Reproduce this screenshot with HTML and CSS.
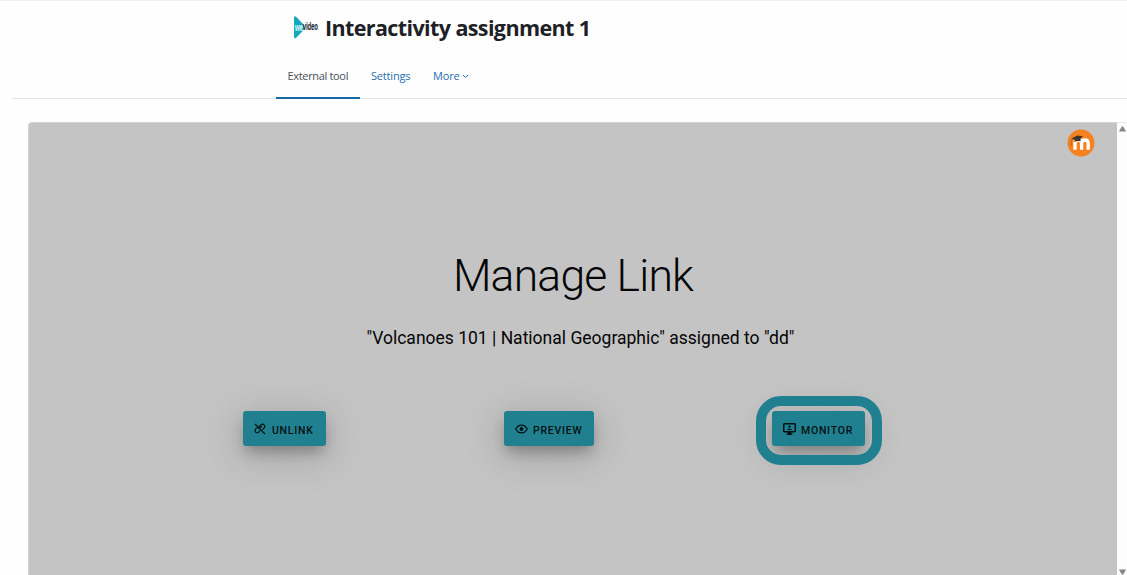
FILE: index.html
```html
<!DOCTYPE html>
<html lang="en">
<head>
    <meta charset="UTF-8">
    <meta name="viewport" content="width=device-width, initial-scale=1.0">
    <title>Interactivity assignment 1</title>
    <link rel="stylesheet" href="styles.css">
</head>
<body>
    <header>
        <div class="title-row">
            <svg class="wevideo-logo" width="26" height="26" viewBox="0 0 26 26">
                <path d="M1 3Q1 .4 3.2 1.8L10 9Q12.6 12.4 10 15.8L3.2 22.8Q1 24.4 1 21.6Z" fill="#12a9bb"/>
                <g transform="scale(1 1.7)">
                    <text class="logo-we" x="1.8" y="9.2">we</text>
                    <text class="logo-video" x="9.8" y="8.8">video</text>
                </g>
            </svg>
            <h1>Interactivity assignment 1</h1>
        </div>
        <nav>
            <a class="tab active" href="#">External tool</a>
            <a class="tab tab-settings" href="#">Settings</a>
            <a class="tab tab-more" href="#">More
                <svg width="7" height="5" viewBox="0 0 7 5"><path d="M1 1l2.5 2.4L6 1" fill="none" stroke="currentColor" stroke-width="1"/></svg>
            </a>
        </nav>
    </header>

    <main>
        <section class="tool-frame">
            <svg class="moodle-badge" width="28" height="28" viewBox="0 0 28 28">
                <circle cx="14" cy="14" r="13.5" fill="#f5821f"/>
                <path d="M8 20.8V14.5Q8 11 11.2 11Q14.6 11 14.6 14.2V20.8M14.6 14.2Q14.6 11 17.9 11Q21.2 11 21.2 14.5V20.8" fill="none" stroke="#fff" stroke-width="3.3"/>
                <path d="M4.2 9.7L10.2 6.6L16 7.3L13.6 9.2V12.3Q10.3 11.3 7.5 12.9V10.4Z" fill="#40352b"/>
                <path d="M5.1 10Q3.8 13 4.3 17" fill="none" stroke="#8c572b" stroke-width=".6"/>
            </svg>
            <h2>Manage Link</h2>
            <p class="assigned">"Volcanoes 101 | National Geographic" assigned to "dd"</p>
            <div class="actions">
                <button class="btn btn-unlink">
                    <svg width="12" height="12" viewBox="0 0 12 12" fill="none" stroke="currentColor" stroke-width="1.2">
                        <path d="M1 1l10 10M5.5 3.2l1.3-1.3a2.2 2.2 0 0 1 3.2 3.2L8.4 6.7M5.3 5.4L4 4.5a2 2 0 0 0-1.6.6l-.7.8a2.2 2.2 0 0 0 3.1 3.2l1.4-1.4M5 3.7l3 .2M6.5 7.3l1-.9"/>
                    </svg>
                    <span>UNLINK</span>
                </button>
                <button class="btn btn-preview">
                    <svg width="13" height="10" viewBox="0 0 13 10">
                        <path d="M.8 5Q2.6 1.1 6.5 1.1T12.2 5Q10.4 8.9 6.5 8.9T.8 5Z" fill="none" stroke="currentColor" stroke-width="1.2"/>
                        <circle cx="6.5" cy="5" r="1.9" fill="currentColor"/>
                    </svg>
                    <span>PREVIEW</span>
                </button>
                <button class="btn btn-monitor">
                    <svg width="13" height="12" viewBox="0 0 13 12">
                        <rect x=".75" y=".75" width="11.5" height="8" rx=".7" fill="none" stroke="currentColor" stroke-width="1.5"/>
                        <path d="M4.8 8.5h3.4v2h1.1V12H3.7v-1.5h1.1ZM4 7V6.4Q6.5 4.9 9 6.4V7Z" fill="currentColor"/>
                        <circle cx="6.5" cy="3.6" r="1.2" fill="currentColor"/>
                    </svg>
                    <span>MONITOR</span>
                </button>
            </div>
        </section>
        <div class="scrollbar">
            <svg width="7" height="6" viewBox="0 0 7 6"><path d="M2.8.5h1.4L7 5.5H0Z" fill="#858585"/></svg>
            <svg width="7" height="6" viewBox="0 0 7 6"><path d="M0 .5h7L4.2 5.5H2.8Z" fill="#858585"/></svg>
        </div>
    </main>
</body>
</html>
```
FILE: styles.css
```css
body {
    margin: 0;
    height: 575px;
    overflow: hidden;
    box-sizing: border-box;
    border-top: 1px solid #eceeef;
    background-color: #fefefe;
    font-family: "Open Sans", "Noto Sans", sans-serif;
    color: #1d2125;
}

header {
    height: 98px;
    margin-left: 12px;
    box-sizing: border-box;
    border-bottom: 1px solid #dee2e6;
}

.title-row {
    display: flex;
    align-items: center;
    height: 53px;
    padding-left: 281px;
}

.wevideo-logo {
    margin-right: 6px;
}

.logo-we {
    font: bold 6px "Open Sans", sans-serif;
    letter-spacing: -0.3px;
    fill: #d6f5f8;
}

.logo-video {
    font: bold 6px "Open Sans", sans-serif;
    letter-spacing: -0.3px;
    fill: #2d3338;
}

h1 {
    margin: 0;
    padding-top: 1px;
    font-size: 21.5px;
    font-weight: bold;
    line-height: 30px;
    letter-spacing: -0.61px;
    white-space: nowrap;
}

nav {
    display: flex;
    height: 45px;
    padding-left: 264px;
}

.tab {
    box-sizing: border-box;
    height: 45px;
    padding-top: 14px;
    font-size: 11px;
    line-height: 16px;
    letter-spacing: -0.18px;
    color: #1f6fb2;
    text-decoration: none;
    white-space: nowrap;
}

.tab.active {
    width: 84px;
    padding-left: 11.5px;
    letter-spacing: -0.33px;
    color: #495057;
    border-bottom: 2px solid #1768a6;
}

.tab-settings {
    width: 62px;
    padding-left: 11px;
}

.tab-more {
    padding-left: 11px;
}

.tab-more svg {
    margin-bottom: 1px;
}

main {
    display: flex;
    height: 453px;
    margin: 23px 0 0 28px;
}

.tool-frame {
    position: relative;
    width: 1089px;
    box-sizing: border-box;
    padding-top: 123px;
    border-top: 1px solid #d4d6d8;
    border-left: 1px solid #d4d6d8;
    border-top-left-radius: 4px;
    background-color: #c4c4c4;
    font-family: Roboto, sans-serif;
    color: #050505;
}

.moodle-badge {
    position: absolute;
    top: 6px;
    right: 22px;
}

h2 {
    margin: 0;
    font-size: 44.5px;
    font-weight: 300;
    line-height: 60px;
    letter-spacing: -0.8px;
    text-align: center;
}

.assigned {
    margin: 21px 0 0;
    padding-left: 15px;
    font-size: 17.5px;
    line-height: 22px;
    text-align: center;
}

.actions {
    display: flex;
    gap: 178px;
    margin: 62px 0 0 214px;
}

.btn {
    position: relative;
    display: flex;
    align-items: center;
    height: 35px;
    padding: 0 0 0 11px;
    border: none;
    border-radius: 3px;
    background-color: #20808f;
    box-shadow: 0 8px 14px -3px rgba(0, 0, 0, 0.27), 0 8px 36px 4px rgba(0, 0, 0, 0.16);
    color: #061012;
    font-family: Roboto, sans-serif;
    font-size: 10.5px;
    font-weight: 500;
    letter-spacing: 0.75px;
}

.btn span {
    padding-top: 3px;
}

.btn-unlink {
    width: 83px;
    gap: 6px;
}

.btn-preview {
    width: 90px;
    gap: 5px;
}

.btn-monitor {
    width: 93px;
    gap: 5px;
}

/* ring around the highlighted button */
.btn-monitor::after {
    content: "";
    position: absolute;
    top: -15px;
    left: -16px;
    width: 106px;
    height: 49px;
    border: 10px solid #20808f;
    border-radius: 25px;
}

.scrollbar {
    display: flex;
    flex-direction: column;
    justify-content: space-between;
    align-items: center;
    width: 10px;
    box-sizing: border-box;
    padding: 3px 0 0 1px;
    border-top: 1px solid #e6e6e6;
    background-color: #fcfcfc;
}
```
